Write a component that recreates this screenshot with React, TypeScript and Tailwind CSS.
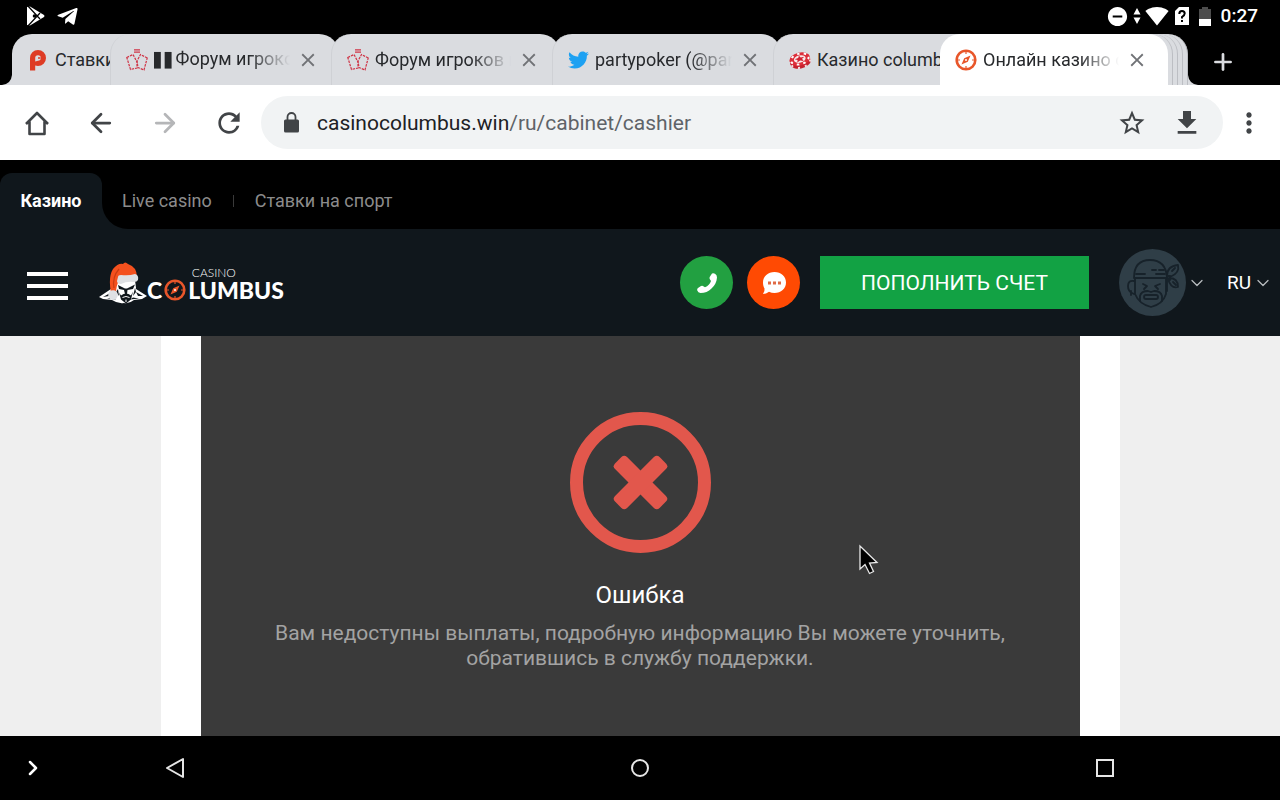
import type { ReactNode } from 'react';
import { FaTelegramPlane, FaTwitter } from 'react-icons/fa';
import { MdClose, MdDoNotDisturbOn, MdFileDownload, MdLock, MdMoreVert, MdRefresh, MdSignalWifi4Bar, MdStarBorder } from 'react-icons/md';
import { ArrowLeft, ArrowRight, ChevronDown, ChevronRight, Plus } from 'lucide-react';

const PlayIcon = () => (
    <svg className="w-5 h-5" viewBox="0 0 20 20" fill="#fff">
        <path d="M1 1v18l3 .500L18 11Q19 10 18 9L4 .500z" />
        <path d="M2 0 14 13M2 20 14 7" stroke="#000" strokeWidth="1.3" />
        <circle cx="8.500" cy="10" r="1.800" fill="#000" />
    </svg>
);

const PokerIcon = () => (
    <svg className="w-[22px] h-[22px] shrink-0" viewBox="0 0 22 22">
        <path d="M3 21.500V9a8 8 0 1 1 8 8c-1 0-2-.2-2.800-.5v5z" fill="#de3c25" />
        <path d="M8.200 12.500V9a2.800 2.800 0 1 1 2.800 2.800z" fill="#dadce0" />
        <path d="M11 9h2.500" stroke="#de3c25" strokeWidth="1.500" fill="none" />
    </svg>
);

const ForumIcon = () => (
    <svg className="w-[22px] h-[22px] shrink-0" viewBox="0 0 22 22" fill="none" stroke="#cf3345" strokeWidth="1.200">
        <path d="M8 .8h6M8 3.200h6" />
        <path d="M.8 8.500 7 5.500 11 13 11 19 4.500 20.500z" strokeDasharray="2.500 1" />
        <path d="M21.200 9 14.500 5.500 11 12 12 18.500 18 21z" strokeDasharray="2.500 1" />
    </svg>
);

const ChipIcon = () => (
    <svg className="w-[22px] h-[22px] shrink-0" viewBox="0 0 22 22">
        <g transform="rotate(-14 11 11)">
            <ellipse cx="11" cy="13" rx="10.500" ry="6.500" fill="#c6202e" />
            <ellipse cx="11" cy="13" rx="9.700" ry="5.700" fill="none" stroke="#f3dfe1" strokeWidth="2" strokeDasharray="2 5" />
            <ellipse cx="11" cy="10" rx="10.500" ry="6.500" fill="#dd2e3a" />
            <ellipse cx="11" cy="10" rx="9" ry="5.300" fill="none" stroke="#fff" strokeWidth="2" strokeDasharray="2.500 4" />
            <ellipse cx="11" cy="10" rx="6" ry="3.700" fill="#f7e9ea" />
            <path d="m11 6.500 1.300 2.200 3.700.2-2.700 1.500 1 2.400-3.300-1.300-3.300 1.300 1-2.400L6 8.900l3.700-.2z" fill="#d2202f" />
        </g>
    </svg>
);

const CompassIcon = () => (
    <svg className="w-[22px] h-[22px] shrink-0" viewBox="0 0 22 22" fill="none">
        <circle cx="11" cy="11" r="9.300" stroke="#e8562a" strokeWidth="2.600" />
        <path d="M11 3v2M11 17v2M3 11h2M17 11h2" stroke="#e8562a" strokeWidth="1.200" />
        <path d="M15.500 6.500 12.800 12.800 6.500 15.500 9.200 9.200z" fill="#e8562a" />
        <circle cx="11" cy="11" r="1" fill="#fff" />
    </svg>
);

const HomeIcon = () => (
    <svg className="w-[26px] h-[26px]" viewBox="0 0 26 26" fill="none" stroke="#414447" strokeWidth="2.600" strokeLinejoin="round">
        <path d="M2 14 13 3 24 14M5.500 11.500V24h15V11.500" />
    </svg>
);

const SailorLogo = () => (
    <svg className="w-12 h-[42px]" viewBox="0 0 48 42">
        <path d="M0 35 12 27 18 23h15l4 4 11 7-5 3-8 1q-5 4-10 3-6 1-12-3L4 37z" fill="#fff" />
        <path d="M4 35 13 30 10 34zM44 34 37 30 39 34zM8 36.500l6-1 3 2zM40 36.500l-6-1-3 2z" fill="#10171c" />
        <path d="M18 18h18l1 8-5 11-6 4-6-4-3-11z" fill="#fff" />
        <path d="M19 23 26 26.500 28 26.500 36 22.500 34 27 28.500 28 28 32 26 32 25 28 20 27zM22 33.500q5-4 10 0l2-4-2 8-5 4-5-4-2-7zM19 27l1 7-3-4zM36 26l-2 8 3-4z" fill="#10171c" />
        <path d="M23.500 35.500q3.500-2 7 0M27 37.500v2.500" stroke="#fff" strokeWidth="1" />
        <path d="M12 31Q9 15 14 7 19 1 24 2 26-1 29 2q9 3 9 13L20 19q-3 4-3 13z" fill="#f4511e" />
        <path d="M15 26Q13 15 20 7" stroke="#c93c12" strokeWidth="1.200" fill="none" />
        <path d="M19 15q0-2 3-2 8 1 14-1 4 1 3 6-1 2-4 2-7-1-13 2-4 0-4-3z" fill="#dfe1e4" />
        <circle cx="14" cy="33" r="4.800" fill="#dfe1e4" />
    </svg>
);

const HandsetIcon = () => (
    <svg className="w-5 h-5" viewBox="0 0 20 20" fill="#fff">
        <path d="M15 .5Q16.500-.3 18 .7 20 2 20 4.500 19.500 11 14.500 15.500 10 20 3.500 20 1 19.500.3 17.500-.2 16 1 15L4 13Q5.500 12.300 6.700 13.500L8 14.300Q12.500 12.500 14 8L13 6.500Q12 5 13 3.500z" />
    </svg>
);

const PirateAvatar = () => (
    <svg className="w-[67px] h-[67px]" viewBox="0 0 67 67" fill="none" stroke="#17222a" strokeWidth="1.800" strokeLinecap="round" strokeLinejoin="round">
        <circle cx="33.500" cy="33.500" r="33.500" fill="#2f3e47" stroke="none" />
        <path d="M15 29Q15 11 31 11t17 18zM16 29v16q4 10 16 13 12-3 15-13V29" />
        <path d="M15 32q-6-1-6 5 0 5 4 7l2 1M12 42v4M48 32v10" />
        <path d="M48 27Q48 17 59 16q2 8-8 12M50 29q9 0 9 9-7 2-10-8M48 27h3v4h-3zM53 22l3-3M54 33l3 3" />
        <path d="M17 25h9M33 21h4M40 21h5M37 25h9M24 35l4 2-3 3M41 35l-5 2 3 3" />
        <path d="M21 52v-5q1-5 8-5l3 1 3-1q7 0 8 5v5" />
        <path d="M27 46h10q2 0 2 2t-2 2H27q-2 0-2-2t2-2z" />
    </svg>
);

const SimIcon = () => (
    <svg className="w-[14px] h-[18px]" viewBox="0 0 14 18">
        <path d="M4 0h10v18H0V4z" fill="#fff" />
        <path d="M4.300 7q0-3 2.700-3t2.700 2.500q0 1.500-2.700 3.500v1.500M7 13v2" stroke="#000" strokeWidth="2" fill="none" />
    </svg>
);

const MousePointer = () => (
    <svg className="absolute left-[657px] top-[208px] w-[22px] h-[32px]" viewBox="0 0 22 32">
        <path d="M2 2v23l5-4.500 4.500 9 4-2-4-8.500 7.500-.5z" fill="#000" stroke="#e8e8e8" strokeWidth="1.300" />
    </svg>
);

type Tab = { title: string; icon: ReactNode; place: string; marked?: boolean; closable: boolean };

const tabs: Tab[] = [
    { title: 'Ставки', icon: <PokerIcon />, place: 'w-[150px] -ml-2.5 bg-[#dadce0]', closable: false },
    { title: 'Форум игроков', icon: <ForumIcon />, place: 'w-[229px] -ml-[52px] bg-[#dadce0] border-l border-[#cfd1d5]', marked: true, closable: true },
    { title: 'Форум игроков на', icon: <ForumIcon />, place: 'w-[229px] -ml-2 bg-[#dadce0] border-l border-[#cfd1d5]', closable: true },
    { title: 'partypoker (@party', icon: <FaTwitter className="w-[21px] h-[22px] shrink-0 text-[#1da1f2]" />, place: 'w-[229px] -ml-2 bg-[#dadce0] border-l border-[#cfd1d5]', closable: true },
    { title: 'Казино columb', icon: <ChipIcon />, place: 'w-[229px] -ml-2 bg-[#dadce0] border-l border-[#cfd1d5]', closable: false },
    { title: 'Онлайн казино co', icon: <CompassIcon />, place: 'w-[228px] -ml-[62px] bg-white z-20', closable: true },
];

const stackedTabs = ['z-[14]', 'z-[13]', 'z-[12]', 'z-[11]'];

function StatusBar() {
    return (
        <div className="h-8 px-[22px] flex items-center justify-between text-white">
            <div className="flex items-center gap-2.5 pl-1">
                <PlayIcon />
                <FaTelegramPlane className="w-[23px] h-[23px]" />
            </div>
            <div className="flex items-center">
                <MdDoNotDisturbOn className="w-[23px] h-[23px]" />
                <svg className="w-2 h-4 ml-1 mr-1" viewBox="0 0 8 16" fill="#fff">
                    <path d="M4 0 7.500 6.500H.5zM4 16 .5 9.500h7z" />
                </svg>
                <MdSignalWifi4Bar className="w-6 h-6" />
                <span className="ml-1.5"><SimIcon /></span>
                <svg className="w-3 h-[19px] ml-2.5" viewBox="0 0 12 19">
                    <path d="M0 2h3V0h6v2h3v17H0z" fill="#4d4d4d" />
                    <path d="M0 12h12v7H0z" fill="#fff" />
                </svg>
                <span className="ml-2.5 text-[19px] leading-6 font-medium">0:27</span>
            </div>
        </div>
    );
}

function TabStrip() {
    return (
        <div className="flex pt-0.5 pl-3 isolate">
            {/* Foot of the first tab */}
            <svg className="w-2.5 h-2.5 -ml-2.5 mr-2.5 self-end" viewBox="0 0 10 10" fill="#dadce0">
                <path d="M10 0Q9 9 0 10h10z" />
            </svg>
            {tabs.map((tab, i) => (
                <div key={i} className={`relative h-[51px] shrink-0 rounded-t-[20px] pl-[15px] pr-[19px] flex items-center gap-1.5 ${tab.place}`}>
                    {tab.icon}
                    <span className={`flex-1 overflow-hidden whitespace-nowrap text-[18px] leading-6 text-[#27292c] ${tab.closable ? '[mask-image:linear-gradient(to_right,#000_70%,transparent)]' : ''}`}>
                        {tab.marked && <span className="font-['DejaVu_Sans',sans-serif] text-[14px]">▋▋</span>}
                        {tab.title}
                    </span>
                    {tab.closable && (
                        <button aria-label="Закрыть вкладку" className="w-6 h-6 flex items-center justify-center text-[#707276]">
                            <MdClose className="w-[22px] h-[22px]" />
                        </button>
                    )}
                </div>
            ))}
            {stackedTabs.map((z) => (
                <div key={z} className={`relative h-[51px] w-[60px] -ml-[55px] rounded-tr-[20px] bg-[#dadce0] border-r border-[#bcbec3] ${z}`} />
            ))}
            <svg className="w-2.5 h-2.5 self-end" viewBox="0 0 10 10" fill="#dadce0">
                <path d="M0 0q1 9 10 10H0z" />
            </svg>
            <button aria-label="Новая вкладка" className="ml-2.5 w-[30px] flex items-center justify-center text-[#dadce0]">
                <Plus className="w-[26px] h-[26px] mt-1" strokeWidth={2.5} />
            </button>
        </div>
    );
}

function Toolbar() {
    return (
        <div className="h-[75px] bg-white flex items-center px-[5px] text-[#414447]">
            <button aria-label="Главная" className="w-16 flex justify-center"><HomeIcon /></button>
            <button aria-label="Назад" className="w-16 flex justify-center"><ArrowLeft className="w-[30px] h-[30px]" strokeWidth={2.2} /></button>
            <button aria-label="Вперёд" className="w-16 flex justify-center text-[#b5b6b8]"><ArrowRight className="w-[30px] h-[30px]" strokeWidth={2.2} /></button>
            <button aria-label="Обновить" className="w-16 flex justify-center"><MdRefresh className="w-8 h-8" /></button>
            <form className="flex-1 h-[53px] rounded-full bg-[#f1f3f4] flex items-center pl-5 pr-5">
                {/* Solid lock, no keyhole */}
                <svg className="w-[21px] h-[21px] mr-[15px]" viewBox="0 0 21 21" fill="none">
                    <rect x="3" y="7.500" width="15" height="13" rx="1.500" fill="#414447" />
                    <path d="M6.500 8V5a4 4 0 0 1 8 0v3" stroke="#414447" strokeWidth="1.800" />
                </svg>
                <label htmlFor="path" className="text-[21px] leading-7 text-[#202124]">casinocolumbus.win</label>
                <input id="path" defaultValue="/ru/cabinet/cashier" className="flex-1 min-w-0 bg-transparent outline-none text-[21px] leading-7 text-[#5f6368]" />
                <button type="button" aria-label="В закладки" className="mr-6"><MdStarBorder className="w-[30px] h-[30px]" /></button>
                <button type="button" aria-label="Скачать"><MdFileDownload className="w-8 h-8" /></button>
            </form>
            <button aria-label="Меню" className="w-[52px] flex justify-center"><MdMoreVert className="w-8 h-8" /></button>
        </div>
    );
}

function SiteHeader() {
    return (
        <header className="bg-[#10171c]">
            <nav className="bg-black pt-[13px] flex text-[18px] leading-6">
                <a href="#casino" className="h-14 w-[102px] flex items-center justify-center rounded-t-xl bg-[#10171c] text-white font-bold">Казино</a>
                <div className="flex-1 bg-[#10171c]">
                    <div className="h-14 bg-black rounded-bl-[26px] flex items-center pl-5 text-[#8c8c8c]">
                        <a href="#live">Live casino</a>
                        <span className="w-px h-3 mx-[21px] bg-[#3a3a3a]" />
                        <a href="#sport">Ставки на спорт</a>
                    </div>
                </div>
            </nav>
            <div className="h-[107px] flex items-center pl-[27px] pr-[7px]">
                <button aria-label="Открыть меню" className="w-[41px] flex flex-col gap-2 mt-1.5">
                    <span className="h-1 bg-white" />
                    <span className="h-1 bg-white" />
                    <span className="h-1 bg-white" />
                </button>
                <a href="#home" className="ml-[31px] flex items-end text-white font-['Lato',sans-serif]">
                    <SailorLogo />
                    <span className="flex flex-col pb-[3px]">
                        <span className="self-end mr-12 text-[12px] leading-3 font-light">CASINO</span>
                        <span className="flex items-center gap-0.5 text-[23px] leading-[22px] font-black">
                            C<CompassIcon />LUMBUS
                        </span>
                    </span>
                </a>
                <div className="ml-auto flex items-center">
                    <a href="#phone" aria-label="Позвонить" className="w-[53px] h-[53px] rounded-full bg-[#22a041] flex items-center justify-center">
                        <HandsetIcon />
                    </a>
                    <a href="#chat" aria-label="Чат" className="ml-3.5 w-[53px] h-[53px] rounded-full bg-[#ff4a03] flex items-center justify-center">
                        <svg className="w-6 h-6" viewBox="0 0 24 24">
                            <path d="M12.500 1C19 1 24 5.500 24 11.500S19 22 12.500 22c-2 0-3.800-.4-5.500-1.200Q4 23 1 23q2-2.500 1.500-5.500C1.500 15.800 1 13.700 1 11.500 1 5.500 6 1 12.500 1z" fill="#fff" />
                            <path d="M6 10.500h3v3H6zM11 10.500h3v3h-3zM16 10.500h3v3h-3z" fill="#e06a45" />
                        </svg>
                    </a>
                    <button className="ml-5 h-[53px] px-[41px] bg-[#12a244] text-white text-[21px] leading-7">ПОПОЛНИТЬ СЧЕТ</button>
                    <button aria-label="Профиль" className="ml-[30px] flex items-center gap-px text-[#b8bcbf]">
                        <PirateAvatar />
                        <ChevronDown className="w-5 h-5" strokeWidth={1.5} />
                    </button>
                    <button className="ml-5 flex items-center gap-0.5 text-white text-[19px] leading-6">
                        RU
                        <ChevronDown className="w-5 h-5 text-[#b8bcbf]" strokeWidth={1.5} />
                    </button>
                </div>
            </div>
        </header>
    );
}

function ErrorPanel() {
    return (
        <main className="flex-1 bg-[#efefef] flex justify-center">
            <div className="w-full max-w-[959px] bg-white px-10">
                <section className="relative h-full bg-[#3a3a3a] pt-[76px] px-10 text-center">
                    <svg className="w-[141px] h-[141px] mx-auto" viewBox="0 0 141 141">
                        <circle cx="70.500" cy="70.500" r="64" fill="none" stroke="#e2574c" strokeWidth="13" />
                        <g transform="rotate(45 70.500 70.500)" fill="#e2574c">
                            <rect x="39" y="62" width="63" height="17" rx="4" />
                            <rect x="62" y="39" width="17" height="63" rx="4" />
                        </g>
                    </svg>
                    <h1 className="mt-7 text-[24px] leading-7 text-white">Ошибка</h1>
                    <p className="mt-3 text-[21px] leading-[25px] text-[#a3a3a3]">
                        Вам недоступны выплаты, подробную информацию Вы можете уточнить, обратившись в службу поддержки.
                    </p>
                    <MousePointer />
                </section>
            </div>
        </main>
    );
}

function SystemNav() {
    return (
        <div className="h-16 bg-black text-white flex items-center">
            <button aria-label="Развернуть" className="w-[163px] pl-[21px]"><ChevronRight className="w-6 h-6" strokeWidth={2.5} /></button>
            <div className="flex-1 flex justify-between">
                <button aria-label="Назад">
                    <svg className="w-6 h-6" viewBox="0 0 24 24" fill="none" stroke="#e6e6e6" strokeWidth="2" strokeLinejoin="round"><path d="M20 3v18L4 12z" /></svg>
                </button>
                <button aria-label="Домой">
                    <svg className="w-6 h-6" viewBox="0 0 24 24" fill="none" stroke="#e6e6e6" strokeWidth="2"><circle cx="12" cy="12" r="8" /></svg>
                </button>
                <button aria-label="Недавние">
                    <svg className="w-6 h-6" viewBox="0 0 24 24" fill="none" stroke="#e6e6e6" strokeWidth="2"><path d="M4 4h16v16H4z" /></svg>
                </button>
            </div>
            <div className="w-[163px]" />
        </div>
    );
}

export default function App() {
    return (
        <div className="min-h-screen flex flex-col bg-black overflow-hidden font-['Roboto',sans-serif]">
            <StatusBar />
            <TabStrip />
            <Toolbar />
            <SiteHeader />
            <ErrorPanel />
            <SystemNav />
        </div>
    );
}
